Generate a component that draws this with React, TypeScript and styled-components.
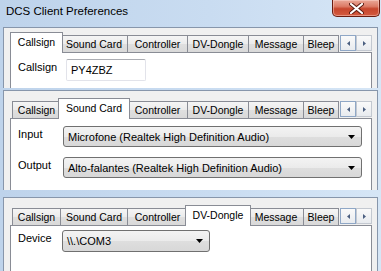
import styled, { createGlobalStyle } from "styled-components";

const Global = createGlobalStyle`
  html, body {
    margin: 0;
    padding: 0;
    background: #c4d8ee;
  }
  body {
    font-family: "Liberation Sans", Arial, sans-serif;
    font-size: 10.5px;
    color: #000;
  }
`;

const Window = styled.div`
  width: 381px;
  height: 271px;
  overflow: hidden;
  display: flex;
  flex-direction: column;
  background: linear-gradient(90deg, #bed3eb 0%, #c9dcf1 55%, #d6e6f6 100%);
`;

const TitleBar = styled.div`
  height: 27px;
  flex-shrink: 0;
  display: flex;
  align-items: flex-start;
  padding-left: 6px;
`;

const Title = styled.div`
  margin-top: 5px;
  font-size: 11.5px;
  color: #000;
`;

const CloseButton = styled.div`
  margin-left: auto;
  margin-right: 1px;
  width: 48px;
  height: 17px;
  box-sizing: border-box;
  border: 1px solid #6a1c10;
  border-top: none;
  border-radius: 0 0 5px 5px;
  background: linear-gradient(#eaa898 0%, #dc7b66 40%, #c7462d 55%, #d45b40 100%);
  display: flex;
  align-items: center;
  justify-content: center;
  box-shadow: inset 0 0 0 1px rgba(255, 220, 210, 0.45);
`;

const Pane = styled.div<{ $h: number; $mt: number; $pt: number }>`
  flex-shrink: 0;
  margin: ${(p) => p.$mt}px 3px 0 3px;
  height: ${(p) => p.$h}px;
  box-sizing: border-box;
  border: 1px solid #8796ab;
  border-bottom: none;
  background: #f0f0f0;
  padding: ${(p) => p.$pt}px 5px 0 6px;
  overflow: hidden;
`;

const TabControl = styled.div`
  position: relative;
`;

const TabRow = styled.div`
  position: relative;
  z-index: 1;
  width: 329px;
  height: 22px;
  margin-bottom: -1px;
  padding-left: 2px;
  box-sizing: border-box;
  display: flex;
  align-items: flex-end;
  overflow: hidden;
`;

const Tab = styled.div<{ $w: number; $active?: boolean }>`
  flex-shrink: 0;
  box-sizing: border-box;
  display: flex;
  align-items: center;
  justify-content: center;
  border: 1px solid #898c95;
  border-bottom: none;
  white-space: nowrap;
  width: ${(p) => (p.$active ? p.$w + 5 : p.$w + 1)}px;
  height: ${(p) => (p.$active ? 21 : 17)}px;
  margin: ${(p) => (p.$active ? "0 -3px 0 -2px" : "0 -1px 1px 0")};
  padding-bottom: ${(p) => (p.$active ? 2 : 0)}px;
  background: ${(p) =>
    p.$active ? "#ffffff" : "linear-gradient(#f5f5f5, #ebebeb 50%, #dfdfdf 51%, #d9d9d9)"};
  position: relative;
  z-index: ${(p) => (p.$active ? 2 : 0)};
`;

const Scroller = styled.div`
  position: absolute;
  z-index: 3;
  left: 330px;
  top: 4px;
  width: 32px;
  height: 16px;
  display: flex;
`;

const ScrollButton = styled.div<{ $hot?: boolean }>`
  width: 16px;
  height: 16px;
  box-sizing: border-box;
  border: 1px solid ${(p) => (p.$hot ? "#8fa7c6" : "#c3c8d0")};
  background: linear-gradient(#fafafa, #e8ebef);
  display: flex;
  align-items: center;
  justify-content: center;
`;

const TabPage = styled.div<{ $pt: number }>`
  border: 1px solid #898c95;
  background: #fff;
  height: 200px;
  padding: ${(p) => p.$pt}px 8px 0 7px;
  box-sizing: border-box;
  display: flex;
  flex-direction: column;
`;

const Field = styled.div<{ $label: number; $gap?: number }>`
  display: grid;
  grid-template-columns: ${(p) => p.$label}px auto;
  align-items: start;
  margin-bottom: ${(p) => p.$gap ?? 0}px;
`;

const Label = styled.div`
  line-height: 14px;
  margin-top: 1px;
  font-size: 11px;
`;

const TextBox = styled.div<{ $w: number }>`
  width: ${(p) => p.$w}px;
  height: 22px;
  box-sizing: border-box;
  border: 1px solid #e2e3ea;
  border-top-color: #abadb3;
  border-radius: 2px;
  background: #fff;
  display: flex;
  align-items: center;
  padding-left: 4px;
  font-size: 11px;
`;

const Combo = styled.div<{ $w: number; $h: number }>`
  width: ${(p) => p.$w}px;
  height: ${(p) => p.$h}px;
  box-sizing: border-box;
  border: 1px solid #707070;
  border-radius: 3px;
  background: linear-gradient(#f3f3f3, #ebebeb 50%, #dedede 51%, #d8d8d8);
  display: flex;
  align-items: center;
  padding: 0 6px 0 4px;
  font-size: 11px;
  white-space: nowrap;
  overflow: hidden;
`;

const ComboText = styled.span`
  flex: 1;
`;

const Arrow = () => (
  <svg width="7" height="4" viewBox="0 0 7 4">
    <path d="M0 0H7L3.5 4Z" fill="#000" />
  </svg>
);

const TABS = [
  { name: "Callsign", w: 48 },
  { name: "Sound Card", w: 67 },
  { name: "Controller", w: 60 },
  { name: "DV-Dongle", w: 61 },
  { name: "Message", w: 55 },
  { name: "Bleep", w: 35 },
];

const Tabs = ({ active }: { active: string }) => (
  <TabRow>
    {TABS.map((t) => (
      <Tab key={t.name} $w={t.w} $active={t.name === active}>
        {t.name}
      </Tab>
    ))}
  </TabRow>
);

const TabScroller = () => (
  <Scroller>
    <ScrollButton $hot>
      <svg width="3" height="5" viewBox="0 0 3 5">
        <path d="M3 0V5L0 2.5Z" fill="#4b5f80" />
      </svg>
    </ScrollButton>
    <ScrollButton>
      <svg width="3" height="5" viewBox="0 0 3 5">
        <path d="M0 0V5L3 2.5Z" fill="#4b5f80" />
      </svg>
    </ScrollButton>
  </Scroller>
);

export default function App() {
  return (
    <>
      <Global />
      <Window>
        <TitleBar>
          <Title>DCS Client Preferences</Title>
          <CloseButton>
            <svg width="15" height="11" viewBox="0 0 15 11">
              <path
                d="M2 1L13 10M13 1L2 10"
                stroke="#5a1a10"
                strokeWidth="4"
                strokeLinecap="round"
              />
              <path
                d="M2 1L13 10M13 1L2 10"
                stroke="#fff"
                strokeWidth="2.2"
                strokeLinecap="round"
              />
            </svg>
          </CloseButton>
        </TitleBar>

        <Pane $h={61} $mt={0} $pt={3}>
          <TabControl>
            <Tabs active="Callsign" />
            <TabScroller />
            <TabPage $pt={6}>
              <Field $label={48}>
                <Label>Callsign</Label>
                <TextBox $w={80}>PY4ZBZ</TextBox>
              </Field>
            </TabPage>
          </TabControl>
        </Pane>

        <Pane $h={100} $mt={2} $pt={6}>
          <TabControl>
            <Tabs active="Sound Card" />
            <TabScroller />
            <TabPage $pt={7}>
              <Field $label={45} $gap={10}>
                <Label>Input</Label>
                <Combo $w={299} $h={21}>
                  <ComboText>Microfone (Realtek High Definition Audio)</ComboText>
                  <Arrow />
                </Combo>
              </Field>
              <Field $label={45}>
                <Label>Output</Label>
                <Combo $w={299} $h={21}>
                  <ComboText>Alto-falantes (Realtek High Definition Audio)</ComboText>
                  <Arrow />
                </Combo>
              </Field>
            </TabPage>
          </TabControl>
        </Pane>

        <Pane $h={74} $mt={7} $pt={6}>
          <TabControl>
            <Tabs active="DV-Dongle" />
            <TabScroller />
            <TabPage $pt={4}>
              <Field $label={44}>
                <Label>Device</Label>
                <Combo $w={148} $h={22}>
                  <ComboText>\\.\COM3</ComboText>
                  <Arrow />
                </Combo>
              </Field>
            </TabPage>
          </TabControl>
        </Pane>
      </Window>
    </>
  );
}
